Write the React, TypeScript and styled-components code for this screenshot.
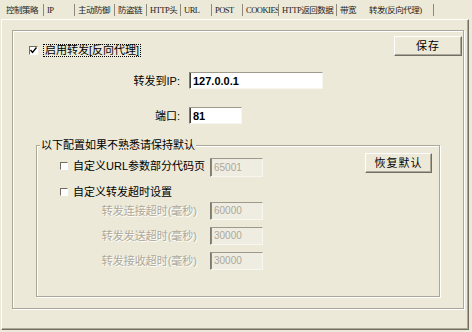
import React from 'react';
import styled, { createGlobalStyle } from 'styled-components';

const GlobalStyle = createGlobalStyle`
  *, *::before, *::after {
    box-sizing: border-box;
  }

  html,
  body {
    margin: 0;
    padding: 0;
    background: #ece9d8;
  }

  body {
    font-family: "Liberation Sans", "Noto Sans CJK SC", sans-serif;
    font-size: 11px;
    line-height: 12px;
    color: #000000;
  }
`;

const Window = styled.div`
  width: 472px;
  height: 332px;
  display: flex;
  flex-direction: column;
  background: #ece9d8;
  overflow: hidden;
`;

const TabBar = styled.div`
  display: flex;
  align-items: center;
  flex-shrink: 0;
  height: 19px;
  padding-left: 3px;
`;

const Tab = styled.div<{ $w: number; $sep: boolean }>`
  width: ${({ $w }) => $w}px;
  height: 12px;
  padding-left: 3px;
  font-family: "Liberation Serif", "Noto Sans CJK SC", serif;
  font-size: 8.5px;
  line-height: 12px;
  letter-spacing: -0.5px;
  white-space: nowrap;
  overflow: hidden;
  color: #222222;
  border-right: 1px solid ${({ $sep }) => ($sep ? '#8d8a7d' : 'transparent')};
`;

const Panel = styled.div`
  flex: 1;
  display: flex;
  flex-direction: column;
  margin: 0 3px 2px 1px;
  padding: 10px 4px 20px 10px;
  border-top: 1px solid #ffffff;
  border-left: 1px solid #ffffff;
  border-right: 1px solid #716f64;
  border-bottom: 1px solid #716f64;
  box-shadow: inset -1px -1px 0 #aca899;
`;

const OuterBox = styled.div`
  flex: 1;
  display: flex;
  flex-direction: column;
  padding: 5px 1px 11px 16px;
  border: 1px solid #aca899;
  box-shadow: 1px 1px 0 #ffffff, inset 1px 1px 0 #ffffff;
`;

const HeaderRow = styled.div`
  display: flex;
  justify-content: space-between;
  align-items: flex-start;
  height: 20px;
`;

const CheckLabel = styled.label<{ $top?: number }>`
  display: flex;
  align-items: center;
  gap: 5px;
  height: 12px;
  margin-top: ${({ $top }) => $top ?? 0}px;
  white-space: nowrap;
`;

const CheckBox = styled.span<{ $size: number }>`
  display: inline-flex;
  align-items: center;
  justify-content: center;
  width: ${({ $size }) => $size}px;
  height: ${({ $size }) => $size}px;
  background: #ffffff;
  border-style: solid;
  border-width: 1px;
  border-color: #6f6d62 #ffffff #ffffff #6f6d62;
`;

const FocusText = styled.span`
  padding: 0 1px;
  border: 1px dotted #000000;
  line-height: 11px;
`;

const Button = styled.button<{ $w: number }>`
  width: ${({ $w }) => $w}px;
  height: 20px;
  padding: 0;
  background: #ece9d8;
  font: inherit;
  color: #000000;
  border-style: solid;
  border-width: 1px;
  border-color: #ffffff #716f64 #716f64 #ffffff;
  box-shadow: inset -1px -1px 0 #aca899;
  letter-spacing: 1px;
`;

const FormGrid = styled.div`
  display: grid;
  grid-template-columns: 151px auto;
  column-gap: 9px;
  row-gap: 18px;
  align-items: center;
  justify-items: start;
  margin-top: 16px;
`;

const FieldLabel = styled.span`
  justify-self: end;
  white-space: nowrap;
`;

const TextBox = styled.div<{ $w: number; $h: number; $disabled?: boolean; $top?: number }>`
  width: ${({ $w }) => $w}px;
  height: ${({ $h }) => $h}px;
  margin-top: ${({ $top }) => $top ?? 0}px;
  padding-left: 3px;
  display: flex;
  align-items: center;
  flex-shrink: 0;
  background: ${({ $disabled }) => ($disabled ? '#efede2' : '#ffffff')};
  border-style: solid;
  border-width: 1px;
  border-color: #9d9a8c #f7f6f0 #f7f6f0 #7f7c6f;
  box-shadow: inset 1px 0 0 ${({ $disabled }) => ($disabled ? '#8a877a' : '#3f3e38')};
  color: ${({ $disabled }) => ($disabled ? '#aca899' : '#000000')};
  font-weight: ${({ $disabled }) => ($disabled ? 400 : 700)};
  font-size: ${({ $disabled }) => ($disabled ? 10 : 11)}px;
`;

const GroupBox = styled.fieldset`
  flex: 1;
  display: flex;
  flex-direction: column;
  min-width: 0;
  margin: 15px 22px 0 7px;
  padding: 2px 7px 0 3px;
  border: 1px solid #aca899;
  box-shadow: 1px 1px 0 #ffffff, inset 1px 1px 0 #ffffff;
`;

const Caption = styled.legend`
  padding: 0 1px;
  margin: 0;
  line-height: 12px;
  background: #ece9d8;
`;

const GroupBody = styled.div`
  display: flex;
  flex-direction: column;
  padding-left: 20px;
`;

const OptionRow = styled.div`
  display: flex;
  align-items: flex-start;
`;

const OptionCell = styled.div`
  width: 150px;
`;

const PushRight = styled.div`
  margin-left: auto;
`;

const TimeoutList = styled.div`
  display: flex;
  flex-direction: column;
  gap: 7px;
  margin-top: 4px;
`;

const TimeoutRow = styled.div`
  display: flex;
  align-items: center;
`;

const DisabledLabel = styled.span`
  width: 137px;
  margin-right: 13px;
  text-align: right;
  white-space: nowrap;
  color: #aca899;
  text-shadow: 1px 1px 0 #ffffff;
`;

const tabs = [
  { label: '控制策略', w: 41 },
  { label: 'IP', w: 31 },
  { label: '主动防御', w: 40 },
  { label: '防盗链', w: 32 },
  { label: 'HTTP头', w: 34 },
  { label: 'URL', w: 31 },
  { label: 'POST', w: 31 },
  { label: 'COOKIES', w: 36 },
  { label: 'HTTP返回数据', w: 58 },
  { label: '带宽', w: 29, noSep: true },
  { label: '转发(反向代理)', w: 68 },
];

const timeouts = [
  { label: '转发连接超时(毫秒)', value: '60000' },
  { label: '转发发送超时(毫秒)', value: '30000' },
  { label: '转发接收超时(毫秒)', value: '30000' },
];

const Check: React.FC<{ size: number; checked?: boolean }> = ({ size, checked }) => (
  <CheckBox $size={size}>
    {checked && (
      <svg width={7} height={7} viewBox="0 0 7 7">
        <polyline points="0.5,3 2.5,5.5 6.5,0.5" fill="none" stroke="#000" strokeWidth={1.4} />
      </svg>
    )}
  </CheckBox>
);

const App: React.FC = () => (
  <Window>
    <GlobalStyle />
    <TabBar>
      {tabs.map((t) => (
        <Tab key={t.label} $w={t.w} $sep={!t.noSep}>
          {t.label}
        </Tab>
      ))}
    </TabBar>
    <Panel>
      <OuterBox>
        <HeaderRow>
          <CheckLabel $top={8}>
            <Check size={9} checked />
            <FocusText>启用转发[反向代理]</FocusText>
          </CheckLabel>
          <Button $w={68}>保存</Button>
        </HeaderRow>
        <FormGrid>
          <FieldLabel>转发到IP:</FieldLabel>
          <TextBox $w={134} $h={17}>127.0.0.1</TextBox>
          <FieldLabel>端口:</FieldLabel>
          <TextBox $w={53} $h={17}>81</TextBox>
        </FormGrid>
        <GroupBox>
          <Caption>以下配置如果不熟悉请保持默认</Caption>
          <GroupBody>
            <OptionRow>
              <OptionCell>
                <CheckLabel $top={7}>
                  <Check size={8} />
                  自定义URL参数部分代码页
                </CheckLabel>
              </OptionCell>
              <TextBox $w={53} $h={19} $top={5} $disabled>
                65001
              </TextBox>
              <PushRight>
                <Button $w={67}>恢复默认</Button>
              </PushRight>
            </OptionRow>
            <CheckLabel $top={9}>
              <Check size={8} />
              自定义转发超时设置
            </CheckLabel>
            <TimeoutList>
              {timeouts.map((t) => (
                <TimeoutRow key={t.label}>
                  <DisabledLabel>{t.label}</DisabledLabel>
                  <TextBox $w={53} $h={18} $disabled>
                    {t.value}
                  </TextBox>
                </TimeoutRow>
              ))}
            </TimeoutList>
          </GroupBody>
        </GroupBox>
      </OuterBox>
    </Panel>
  </Window>
);

export default App;
